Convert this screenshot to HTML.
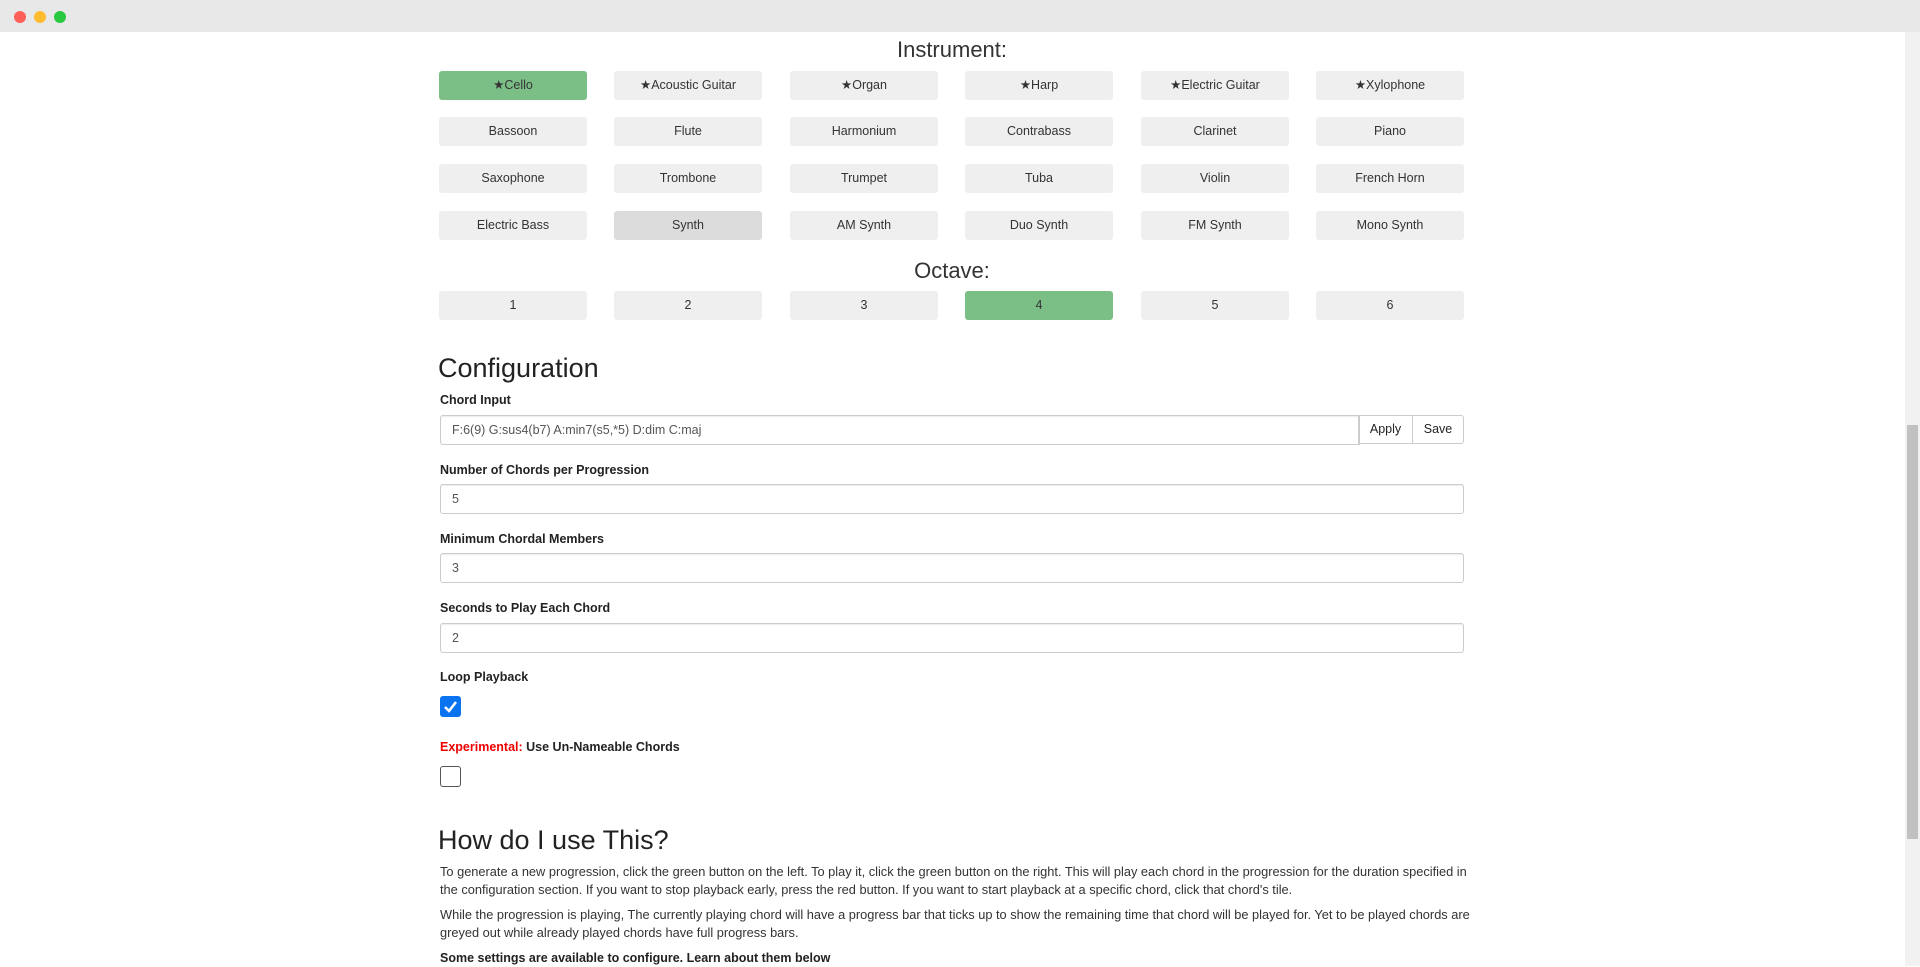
<!DOCTYPE html>
<html><head><style>
*{box-sizing:border-box}
body{margin:0;width:1920px;height:966px;overflow:hidden;background:#fff;font-family:"Liberation Sans",Arial,sans-serif;color:#222;position:relative}
.tb{position:absolute;left:0;top:0;width:1920px;height:32px;background:#e8e8e8}
.dot{position:absolute;top:11px;width:12px;height:12px;border-radius:50%}
.sb{position:absolute;right:0;top:32px;width:15px;height:934px;background:#f1f1f1}
.th{position:absolute;right:2px;top:393px;width:11px;height:414px;background:#c1c1c1}
.abs{position:absolute}
.btn{position:absolute;width:148px;height:29px;background:#efefef;border-radius:3px;font-size:12.5px;color:#333;text-align:center;line-height:29px}
.g{background:#7bbf87}
.d{background:#dcdcdc}
h{position:absolute;left:440px;width:1024px;text-align:center;font-size:22px;color:#333}
.lab{position:absolute;left:440px;font-size:12.5px;font-weight:bold;color:#222}
.inp{position:absolute;left:440px;width:1024px;height:30px;border:1px solid #ccc;border-radius:3px;font-size:12.5px;color:#555;padding-left:11px;line-height:28px;box-shadow:inset 0 1px 1px rgba(0,0,0,.08)}
p{position:absolute;left:440px;width:1036px;margin:0;font-size:12.8px;line-height:18px;color:#333}
</style></head><body>
<div class="tb"><div class="dot" style="left:14px;background:#fe5f57"></div><div class="dot" style="left:34px;background:#febc2e"></div><div class="dot" style="left:54px;background:#28c840"></div></div>
<h style="top:37px">Instrument:</h>
<div class="btn g" style="left:439px;top:71px">★Cello</div>
<div class="btn" style="left:614px;top:71px">★Acoustic Guitar</div>
<div class="btn" style="left:790px;top:71px">★Organ</div>
<div class="btn" style="left:965px;top:71px">★Harp</div>
<div class="btn" style="left:1141px;top:71px">★Electric Guitar</div>
<div class="btn" style="left:1316px;top:71px">★Xylophone</div>
<div class="btn" style="left:439px;top:117px">Bassoon</div>
<div class="btn" style="left:614px;top:117px">Flute</div>
<div class="btn" style="left:790px;top:117px">Harmonium</div>
<div class="btn" style="left:965px;top:117px">Contrabass</div>
<div class="btn" style="left:1141px;top:117px">Clarinet</div>
<div class="btn" style="left:1316px;top:117px">Piano</div>
<div class="btn" style="left:439px;top:164px">Saxophone</div>
<div class="btn" style="left:614px;top:164px">Trombone</div>
<div class="btn" style="left:790px;top:164px">Trumpet</div>
<div class="btn" style="left:965px;top:164px">Tuba</div>
<div class="btn" style="left:1141px;top:164px">Violin</div>
<div class="btn" style="left:1316px;top:164px">French Horn</div>
<div class="btn" style="left:439px;top:211px">Electric Bass</div>
<div class="btn d" style="left:614px;top:211px">Synth</div>
<div class="btn" style="left:790px;top:211px">AM Synth</div>
<div class="btn" style="left:965px;top:211px">Duo Synth</div>
<div class="btn" style="left:1141px;top:211px">FM Synth</div>
<div class="btn" style="left:1316px;top:211px">Mono Synth</div>
<h style="top:258px">Octave:</h>
<div class="btn" style="left:439px;top:291px">1</div>
<div class="btn" style="left:614px;top:291px">2</div>
<div class="btn" style="left:790px;top:291px">3</div>
<div class="btn g" style="left:965px;top:291px">4</div>
<div class="btn" style="left:1141px;top:291px">5</div>
<div class="btn" style="left:1316px;top:291px">6</div>
<div class="abs" style="left:438px;top:353px;font-size:27px;color:#222">Configuration</div>
<div class="lab" style="top:393px">Chord Input</div>
<div class="inp" style="top:415px;width:920px;border-radius:3px 0 0 3px">F:6(9) G:sus4(b7) A:min7(s5,*5) D:dim C:maj</div>
<div class="abs" style="left:1358px;top:415px;width:55px;height:29px;border:1px solid #ccc;font-size:12.5px;text-align:center;line-height:27px">Apply</div>
<div class="abs" style="left:1412px;top:415px;width:52px;height:29px;border:1px solid #ccc;border-radius:0 3px 3px 0;font-size:12.5px;text-align:center;line-height:27px">Save</div>
<div class="lab" style="top:463px">Number of Chords per Progression</div>
<div class="inp" style="top:484px">5</div>
<div class="lab" style="top:532px">Minimum Chordal Members</div>
<div class="inp" style="top:553px">3</div>
<div class="lab" style="top:601px">Seconds to Play Each Chord</div>
<div class="inp" style="top:623px">2</div>
<div class="lab" style="top:670px">Loop Playback</div>
<div class="abs" style="left:440px;top:696px;width:21px;height:21px;background:#0a74f0;border-radius:3px"><svg width="21" height="21"><path d="M5 11l4 4 7-9" stroke="#fff" stroke-width="2.5" fill="none"/></svg></div>
<div class="lab" style="top:740px"><span style="color:#e00">Experimental:</span> Use Un-Nameable Chords</div>
<div class="abs" style="left:440px;top:766px;width:21px;height:21px;border:1.5px solid #555;border-radius:3px"></div>
<div class="abs" style="left:438px;top:825px;font-size:27px;color:#222">How do I use This?</div>
<p style="top:863px">To generate a new progression, click the green button on the left. To play it, click the green button on the right. This will play each chord in the progression for the duration specified in the configuration section. If you want to stop playback early, press the red button. If you want to start playback at a specific chord, click that chord's tile.</p>
<p style="top:906px">While the progression is playing, The currently playing chord will have a progress bar that ticks up to show the remaining time that chord will be played for. Yet to be played chords are greyed out while already played chords have full progress bars.</p>
<p style="top:949px;font-weight:bold;color:#222;font-size:12.5px">Some settings are available to configure. Learn about them below</p>
<div class="sb"><div class="th"></div></div>
</body></html>
